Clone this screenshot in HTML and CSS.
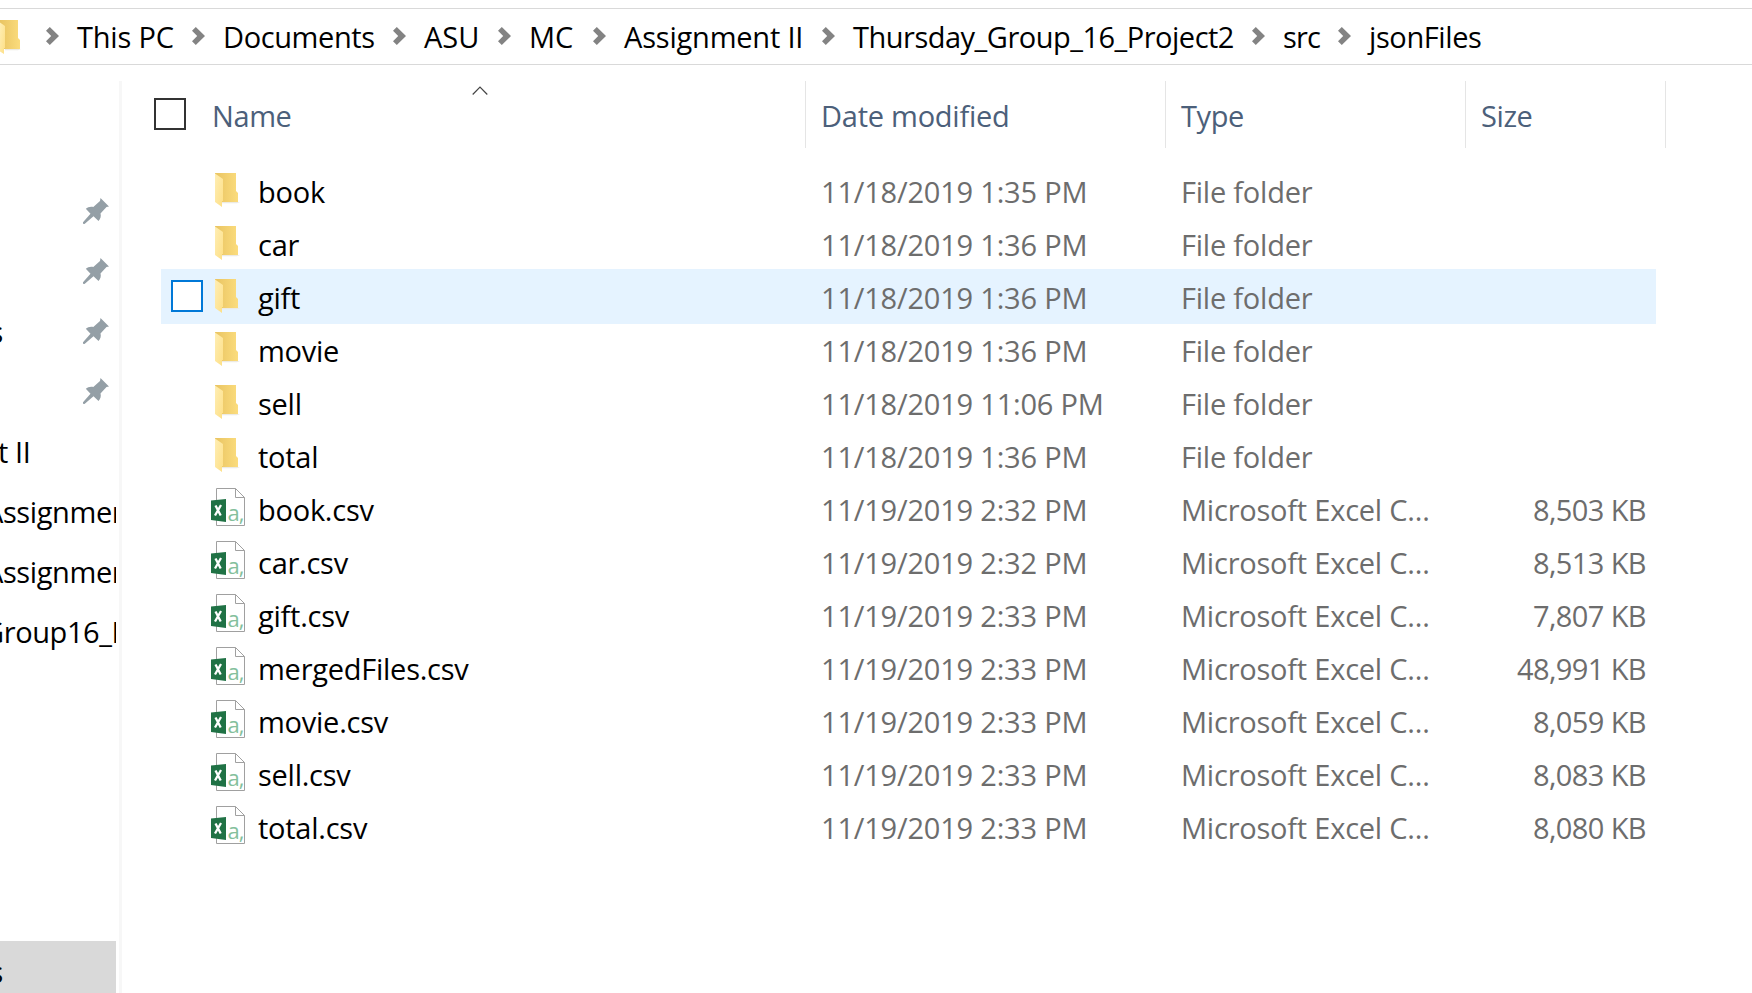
FILE: index.html
```
<!DOCTYPE html>
<html lang="en">
<head>
<meta charset="utf-8">
<title>jsonFiles</title>
<link rel="stylesheet" href="styles.css">
</head>
<body>
<svg class="defs" width="0" height="0">
  <defs>
    <linearGradient id="back" x1="0" y1="0" x2="1" y2="0"><stop offset="0" stop-color="#e9c462"/><stop offset="1" stop-color="#fbdc7d"/></linearGradient>
    <linearGradient id="front" x1="0" y1="0" x2="1" y2="1"><stop offset="0" stop-color="#ffeeb4"/><stop offset="1" stop-color="#fddf86"/></linearGradient>
    <symbol id="folder" viewBox="0 0 25 35">
      <path d="M7 29h18l-3 1.200H7z" fill="#eceae4"/>
      <path d="M0 0h21v18l2 2v9H0z" fill="url(#back)"/>
      <path d="M0 .5L8 6v22H7v6L0 29z" fill="url(#front)"/>
    </symbol>
    <symbol id="csv" viewBox="0 0 34 38">
      <path d="M5.500.5h19l9 9v28h-28z" fill="#fff" stroke="#a0a0a0"/>
      <path d="M24.500.5v9h9" fill="none" stroke="#a0a0a0"/>
      <path d="M0 12.500L15 11v23L0 32z" fill="#207245"/>
      <path d="M4.500 17.500l5.200 10M10 17l-6 10.500" stroke="#fff" stroke-width="2.300" fill="none"/>
      <text x="16.500" y="32.500" class="glyph">a,</text>
    </symbol>
    <symbol id="pin" viewBox="0 0 26 26">
      <path d="M17.500 0L26 8.500l-2.500.5-6 6.500c.8 2.500 0 5.500-2 7.500l-5-4.800L1.500 26 0 25.800v-1.500l7.500-8.500-4.700-5c2-1.800 4.700-2.400 7.500-1.800l6.700-6z" fill="#949fa6"/>
    </symbol>
    <symbol id="chev" viewBox="0 0 13 18"><path d="M0 3.800L3.800 0 13 9l-9.200 9L0 14.200 5.200 9z" fill="#838383"/></symbol>
  </defs>
</svg>
<nav class="path">
  <svg class="root" viewBox="0 0 21 35"><path d="M5 29h16l-3 1.200H5z" fill="#eceae4"/><path d="M0 0h18v18l2 2v9H0z" fill="url(#back)"/><path d="M0 2.500L5 6v22H4v6L0 31.500z" fill="url(#front)"/></svg>
  <div class="crumb c1"><svg><use href="#chev"/></svg><span>This PC</span></div>
  <div class="crumb c2"><svg><use href="#chev"/></svg><span>Documents</span></div>
  <div class="crumb c3"><svg><use href="#chev"/></svg><span>ASU</span></div>
  <div class="crumb c4"><svg><use href="#chev"/></svg><span>MC</span></div>
  <div class="crumb c5"><svg><use href="#chev"/></svg><span>Assignment II</span></div>
  <div class="crumb c6"><svg><use href="#chev"/></svg><span>Thursday_Group_16_Project2</span></div>
  <div class="crumb c7"><svg><use href="#chev"/></svg><span>src</span></div>
  <div class="crumb c8"><svg><use href="#chev"/></svg><span>jsonFiles</span></div>
</nav>
<div class="body">
  <aside class="side">
    <div class="link"><svg class="pin"><use href="#pin"/></svg></div>
    <div class="link"><svg class="pin"><use href="#pin"/></svg></div>
    <div class="link"><span class="tail">s</span><svg class="pin"><use href="#pin"/></svg></div>
    <div class="link"><svg class="pin"><use href="#pin"/></svg></div>
    <div class="link"><span class="two">t II</span></div>
    <div class="link"><span class="cut">Assignment</span></div>
    <div class="link"><span class="cut">Assignment</span></div>
    <div class="link"><span class="cut group">Group16_P</span></div>
    <div class="link current"><span class="tail">s</span></div>
  </aside>
  <main class="list">
    <header class="head">
      <div class="h-name"><span class="box"></span><span>Name</span><svg class="sort" viewBox="0 0 16 9"><path d="M.7 8.500L8 1.200l7.300 7.300" fill="none" stroke="#444" stroke-width="1.200"/></svg></div>
      <div class="h-date">Date modified</div>
      <div class="h-type">Type</div>
      <div class="h-size">Size</div>
    </header>
    <div class="rows">
      <div class="row"><svg class="folder"><use href="#folder"/></svg><b>book</b><i>11/18/2019 1:35 PM</i><u>File folder</u></div>
      <div class="row"><svg class="folder"><use href="#folder"/></svg><b>car</b><i>11/18/2019 1:36 PM</i><u>File folder</u></div>
      <div class="row hover"><span class="box"></span><svg class="folder"><use href="#folder"/></svg><b>gift</b><i>11/18/2019 1:36 PM</i><u>File folder</u></div>
      <div class="row"><svg class="folder"><use href="#folder"/></svg><b>movie</b><i>11/18/2019 1:36 PM</i><u>File folder</u></div>
      <div class="row"><svg class="folder"><use href="#folder"/></svg><b>sell</b><i>11/18/2019 11:06 PM</i><u>File folder</u></div>
      <div class="row"><svg class="folder"><use href="#folder"/></svg><b>total</b><i>11/18/2019 1:36 PM</i><u>File folder</u></div>
      <div class="row"><svg class="csv"><use href="#csv"/></svg><b>book.csv</b><i>11/19/2019 2:32 PM</i><u>Microsoft Excel C...</u><em>8,503 KB</em></div>
      <div class="row"><svg class="csv"><use href="#csv"/></svg><b>car.csv</b><i>11/19/2019 2:32 PM</i><u>Microsoft Excel C...</u><em>8,513 KB</em></div>
      <div class="row"><svg class="csv"><use href="#csv"/></svg><b>gift.csv</b><i>11/19/2019 2:33 PM</i><u>Microsoft Excel C...</u><em>7,807 KB</em></div>
      <div class="row"><svg class="csv"><use href="#csv"/></svg><b>mergedFiles.csv</b><i>11/19/2019 2:33 PM</i><u>Microsoft Excel C...</u><em>48,991 KB</em></div>
      <div class="row"><svg class="csv"><use href="#csv"/></svg><b>movie.csv</b><i>11/19/2019 2:33 PM</i><u>Microsoft Excel C...</u><em>8,059 KB</em></div>
      <div class="row"><svg class="csv"><use href="#csv"/></svg><b>sell.csv</b><i>11/19/2019 2:33 PM</i><u>Microsoft Excel C...</u><em>8,083 KB</em></div>
      <div class="row"><svg class="csv"><use href="#csv"/></svg><b>total.csv</b><i>11/19/2019 2:33 PM</i><u>Microsoft Excel C...</u><em>8,080 KB</em></div>
    </div>
  </main>
</div>
</body>
</html>
```
FILE: styles.css
```
* { box-sizing: border-box; }
html, body { margin: 0; height: 100%; overflow: hidden; }
body {
  display: flex; flex-direction: column; background: #fff; color: #000;
  font-family: "Open Sans", "Noto Sans", sans-serif; font-size: 29px; line-height: 40px;
  letter-spacing: -0.4px; white-space: nowrap;
}
svg { display: block; flex: none; }
.defs { position: absolute; }
.glyph { font-family: "Open Sans", sans-serif; font-size: 22px; fill: #84bf9c; letter-spacing: -1px; }

.path { display: flex; flex: none; height: 57px; margin-top: 8px; border-top: 1px solid #d9d9d9; border-bottom: 1px solid #d9d9d9; }
.root { width: 21px; height: 35px; margin: 11px 25px 0 0; }
.crumb { display: flex; flex: none; padding-top: 8px; }
.crumb svg { width: 13px; height: 18px; margin: 10px 18px 0 0; }
.c1 { width: 146px; letter-spacing: -0.2px; }
.c2 { width: 201px; }
.c3 { width: 105px; letter-spacing: 0; }
.c4 { width: 95px; letter-spacing: 0; }
.c5 { width: 229px; letter-spacing: -0.2px; }
.c6 { width: 430px; letter-spacing: -0.5px; }
.c7 { width: 86px; letter-spacing: -0.8px; }
.c8 { width: 150px; }

.body { display: flex; flex: 1; padding-top: 16px; }
.side { display: flex; flex-direction: column; width: 122px; padding-top: 100px; border-right: 3px solid #f7f7f7; flex: none; }
.link { display: flex; flex: none; width: 116px; height: 60px; padding-top: 11px; overflow: hidden; }
.pin { width: 26px; height: 26px; margin: 6px 7px 0 auto; }
.tail { display: flex; width: 3px; justify-content: flex-end; }
.two { margin-left: -2px; }
.cut { margin-left: -15px; }
.group { margin-left: -17px; }
.current { margin-top: 280px; background: #d9d9d9; }

.list { width: 1545px; }
.head { display: grid; grid-template-columns: 684px 360px 300px 200px; height: 67px; color: #4c607a; }
.head > div { display: flex; padding: 15px 0 0 15px; border-right: 1px solid #e5e5e5; }
.head .h-name { padding-left: 32px; }
.h-date { letter-spacing: -0.25px; }
.box { width: 32px; height: 32px; border: 2px solid #333; background: #fff; flex: none; }
.h-name .box { margin: 2px 26px 0 0; }
.sort { width: 16px; height: 9px; margin: -10px 317px 0 auto; }

.rows { padding-top: 15px; }
.row {
  display: grid; grid-template-columns: 50px 47px 563px 360px 279px 186px;
  width: 1495px; height: 53px; margin-left: 39px; padding-top: 9px; color: #6d6d6d;
}
.row b, .row i, .row u, .row em { font-weight: 400; font-style: normal; text-decoration: none; grid-row: 1; }
.row b { grid-column: 3; color: #000; letter-spacing: -0.25px; }
.row i { grid-column: 4; letter-spacing: -0.2px; }
.row u { grid-column: 5; letter-spacing: -0.22px; }
.row em { grid-column: 6; text-align: right; letter-spacing: -0.6px; }
.folder, .csv, .row .box { grid-row: 1; }
.folder { grid-column: 2; width: 25px; height: 35px; margin: 1px 0 0 4px; }
.csv { grid-column: 2; width: 34px; height: 38px; margin-top: -2px; }
.row .box { grid-column: 1; margin: 2px 0 0 10px; border-color: #0078d7; }
.hover { height: 55px; margin-bottom: -2px; background: #e5f3ff; }
```
